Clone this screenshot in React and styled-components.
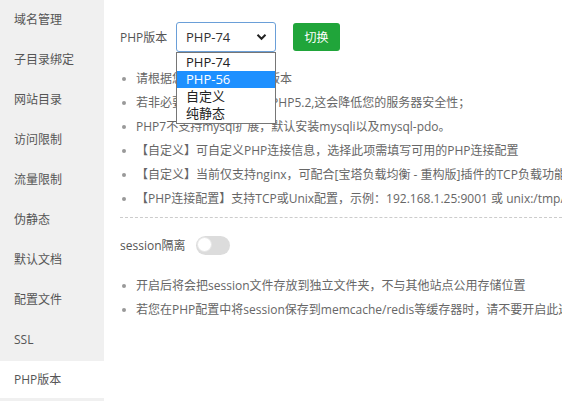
import React from 'react'
import styled, { createGlobalStyle } from 'styled-components'

const GlobalStyle = createGlobalStyle`
  html, body {
    margin: 0;
    padding: 0;
    background: #fff;
  }
  body {
    font-family: "Open Sans", "Noto Sans CJK SC", sans-serif;
    font-size: 12px;
    color: #666;
  }
`

const Page = styled.div`
  display: flex;
  width: 562px;
  height: 401px;
  overflow: hidden;
`

const Sidebar = styled.div`
  width: 104px;
  flex-shrink: 0;
  background: #f0f0f0;
  display: flex;
  flex-direction: column;
`

const NavItem = styled.div`
  padding-left: 14px;
  font-size: 12px;
  color: #555;
  background: ${p => (p.active ? '#fff' : 'transparent')};
  margin-top: ${p => (p.active ? '1px' : '0')};
  height: ${p => (p.active ? '37px' : '40px')};
  line-height: ${p => (p.active ? '37px' : '40px')};
`

const Main = styled.div`
  flex: 1;
  padding: 22px 0 0 16px;
  min-width: 0;
`

const Row = styled.div`
  display: flex;
  align-items: center;
  height: 30px;
`

const Label = styled.span`
  color: #555;
  font-size: 12px;
  width: ${p => p.width || 'auto'};
`

const SelectWrap = styled.div`
  position: relative;
  width: 100px;
  height: 30px;
`

const SelectBox = styled.div`
  box-sizing: border-box;
  height: 30px;
  border: 1px solid #6a9fd8;
  border-radius: 3px;
  display: flex;
  align-items: center;
  justify-content: space-between;
  padding: 0 8px 0 9px;
  font-size: 13px;
  color: #333;
`

const Options = styled.div`
  position: absolute;
  top: 30px;
  left: 0;
  width: 100px;
  box-sizing: border-box;
  border: 1px solid #767676;
  background: #fff;
  padding: 1px 0 1px;
  z-index: 2;
`

const Option = styled.div`
  height: 17px;
  line-height: 17px;
  padding-left: 9px;
  font-size: 13px;
  color: ${p => (p.selected ? '#fff' : '#222')};
  background: ${p => (p.selected ? '#1e90ff' : 'transparent')};
`

const Button = styled.div`
  width: 47px;
  height: 28px;
  margin-left: 17px;
  background: #20a53a;
  border-radius: 3px;
  color: #fff;
  font-size: 12px;
  display: flex;
  align-items: center;
  justify-content: center;
`

const Tips = styled.ul`
  margin: ${p => p.top || 0}px 0 0;
  padding: 0;
  list-style: none;
`

const Tip = styled.li`
  position: relative;
  height: 24px;
  line-height: 24px;
  padding-left: 16px;
  font-size: 12px;
  color: #666;
  white-space: nowrap;
  &::before {
    content: '';
    position: absolute;
    left: 2px;
    top: 10px;
    width: 4px;
    height: 4px;
    border-radius: 50%;
    background: #999;
  }
`

const Divider = styled.div`
  border-top: 1px dashed #ccc;
  margin: 6px 0 12px;
`

const Toggle = styled.div`
  width: 34px;
  height: 19px;
  border-radius: 10px;
  background: #dcdcdc;
  position: relative;
  margin-left: 10px;
  &::after {
    content: '';
    position: absolute;
    left: 1px;
    top: 1px;
    width: 15px;
    height: 15px;
    border-radius: 50%;
    background: #fff;
    border: 1px solid #e6e6e6;
    box-sizing: border-box;
  }
`

const nav = [
  '域名管理',
  '子目录绑定',
  '网站目录',
  '访问限制',
  '流量限制',
  '伪静态',
  '默认文档',
  '配置文件',
  'SSL',
  'PHP版本'
]

const phpTips = [
  '请根据您的程序需求选择版本',
  '若非必要,请尽量不要使用PHP5.2,这会降低您的服务器安全性；',
  'PHP7不支持mysql扩展，默认安装mysqli以及mysql-pdo。',
  '【自定义】可自定义PHP连接信息，选择此项需填写可用的PHP连接配置',
  '【自定义】当前仅支持nginx，可配合[宝塔负载均衡 - 重构版]插件的TCP负载功能实现PHP负载集群',
  '【PHP连接配置】支持TCP或Unix配置，示例：192.168.1.25:9001 或 unix:/tmp/php-cgi-74.sock'
]

const sessionTips = [
  '开启后将会把session文件存放到独立文件夹，不与其他站点公用存储位置',
  '若您在PHP配置中将session保存到memcache/redis等缓存器时，请不要开启此选项'
]

const Chevron = () => (
  <svg width="11" height="8" viewBox="0 0 11 8">
    <path d="M1.5 1.8 L5.5 5.8 L9.5 1.8" fill="none" stroke="#222" strokeWidth="2" />
  </svg>
)

export default () => (
  <>
    <GlobalStyle />
    <Page>
      <Sidebar>
        {nav.map(n => (
          <NavItem key={n} active={n === 'PHP版本'}>
            {n}
          </NavItem>
        ))}
      </Sidebar>
      <Main>
        <Row>
          <Label width="56px">PHP版本</Label>
          <SelectWrap>
            <SelectBox>
              PHP-74
              <Chevron />
            </SelectBox>
            <Options>
              <Option>PHP-74</Option>
              <Option selected>PHP-56</Option>
              <Option>自定义</Option>
              <Option>纯静态</Option>
            </Options>
          </SelectWrap>
          <Button>切换</Button>
        </Row>
        <Tips top={15}>
          {phpTips.map(t => (
            <Tip key={t}>{t}</Tip>
          ))}
        </Tips>
        <Divider />
        <Row>
          <Label>session隔离</Label>
          <Toggle />
        </Row>
        <Tips top={14}>
          {sessionTips.map(t => (
            <Tip key={t}>{t}</Tip>
          ))}
        </Tips>
      </Main>
    </Page>
  </>
)
